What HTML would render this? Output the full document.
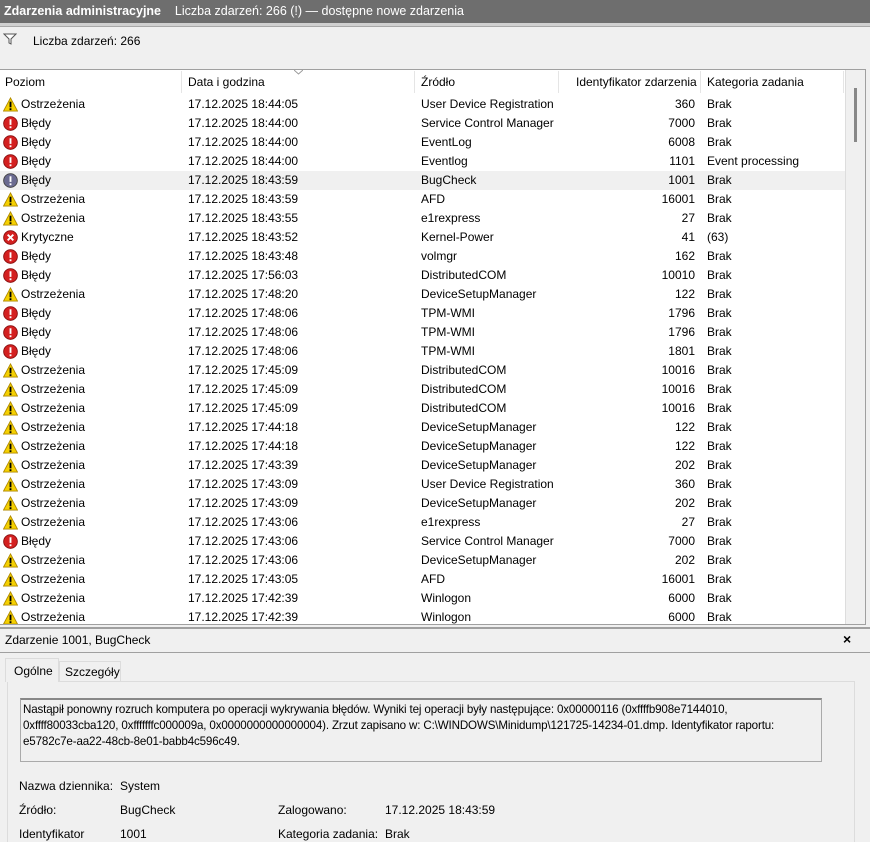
<!DOCTYPE html>
<html><head><meta charset="utf-8"><style>
*{margin:0;padding:0;box-sizing:border-box}
body{width:870px;height:842px;overflow:hidden;background:#f0f0f0;font-family:"Liberation Sans",sans-serif;font-size:12px;color:#000;position:relative}
.a{position:absolute;white-space:nowrap}
#title{left:0;top:0;width:870px;height:23px;background:#6e6e6e;color:#fff;line-height:23px;padding-left:4px;font-size:12.5px}
#list{left:0;top:69px;width:866px;height:556px;background:#fff;border-top:1px solid #a0a0a0;border-bottom:1px solid #a0a0a0;overflow:hidden}
.hdr{position:absolute;top:0;height:24px;line-height:24px;color:#000}
.sep{position:absolute;top:1px;height:22px;width:1px;background:#e5e5e5}
.row{position:absolute;left:0;width:845px;height:19px;line-height:19px}
.row span{position:absolute}
.ic{position:absolute;left:3px;top:2px;width:15px;height:15px}
</style></head><body>
<div class="a" id="title"><b>Zdarzenia administracyjne</b>&nbsp;&nbsp;&nbsp;&nbsp;Liczba zdarzeń: 266 (!) — dostępne nowe zdarzenia</div>
<div class="a" style="left:0;top:23px;width:870px;height:3px;background:#d0d0d0"></div>
<div class="a" style="left:0;top:26px;width:870px;height:1px;background:#a8a8a8"></div>
<svg class="a" style="left:3px;top:33px" width="14" height="12"><path d="M1 1H13L8 6V11L6 10V6Z" fill="#fff" stroke="#555"/></svg>
<div class="a" style="left:33px;top:34px">Liczba zdarzeń: 266</div>
<div class="a" id="list">
<div class="hdr" style="left:5px">Poziom</div><div class="sep" style="left:181px"></div>
<div class="hdr" style="left:188px">Data i godzina</div><div class="sep" style="left:414px"></div>
<svg class="a" style="left:294px;top:0" width="9" height="5"><path d="M0 0L4.5 4L9 0" fill="none" stroke="#999"/></svg>
<div class="hdr" style="left:421px">Źródło</div><div class="sep" style="left:558px"></div>
<div class="hdr" style="left:576px">Identyfikator zdarzenia</div><div class="sep" style="left:700px"></div>
<div class="hdr" style="left:707px">Kategoria zadania</div><div class="sep" style="left:843px"></div>
<div id="rows"></div>
<div class="a" style="left:845px;top:0;width:21px;height:556px;background:#f0f0f0;border-left:1px solid #ddd;border-right:1px solid #a0a0a0"></div>
<div class="a" style="left:854px;top:18px;width:3px;height:54px;background:#888"></div>
</div>
<div class="a" style="left:0;top:627px;width:870px;height:2px;background:#a0a0a0"></div>
<div class="a" style="left:5px;top:633px">Zdarzenie 1001, BugCheck</div>
<div class="a" style="left:843px;top:631px;font-weight:bold;font-size:14px">×</div>
<div class="a" style="left:0;top:652px;width:870px;height:1px;background:#a0a0a0"></div>
<div class="a" style="left:7px;top:681px;width:848px;height:161px;background:#f0f0f0;border:1px solid #dcdcdc;border-bottom:none"></div>
<div class="a" style="left:5px;top:658px;width:54px;height:24px;background:#f0f0f0;border:1px solid #dcdcdc;border-bottom:none;padding:5px 0 0 8px">Ogólne</div>
<div class="a" style="left:59px;top:661px;width:62px;height:20px;border:1px solid #dcdcdc;border-bottom:none;padding:3px 0 0 5px">Szczegóły</div>
<div class="a" style="left:20px;top:698px;width:802px;height:64px;border:1px solid #aaa;border-top:2px solid #888;background:#f0f0f0;padding:2px 2px;white-space:normal;line-height:16px;font-size:11.6px;letter-spacing:-0.15px">Nastąpił ponowny rozruch komputera po operacji wykrywania błędów. Wyniki tej operacji były następujące: 0x00000116 (0xffffb908e7144010, 0xffff80033cba120, 0xfffffffc000009a, 0x0000000000000004). Zrzut zapisano w: C:\WINDOWS\Minidump\121725-14234-01.dmp. Identyfikator raportu: e5782c7e-aa22-48cb-8e01-babb4c596c49.</div>
<div class="a" style="left:19px;top:779px">Nazwa dziennika:</div><div class="a" style="left:120px;top:779px">System</div>
<div class="a" style="left:19px;top:803px">Źródło:</div><div class="a" style="left:120px;top:803px">BugCheck</div>
<div class="a" style="left:278px;top:803px">Zalogowano:</div><div class="a" style="left:385px;top:803px">17.12.2025 18:43:59</div>
<div class="a" style="left:19px;top:827px">Identyfikator</div><div class="a" style="left:120px;top:827px">1001</div>
<div class="a" style="left:278px;top:827px">Kategoria zadania:</div><div class="a" style="left:385px;top:827px">Brak</div>
<script>
const W='<svg class="ic" viewBox="0 0 16 16"><path d="M8 1L15.5 15H0.5Z" fill="#f5d000" stroke="#b08a00"/><rect x="7" y="5" width="2" height="6" fill="#000"/><rect x="7" y="12" width="2" height="2" fill="#000"/></svg>';
const E='<svg class="ic" viewBox="0 0 16 16"><circle cx="8" cy="8" r="7.3" fill="#d42020" stroke="#8a1010"/><rect x="7" y="3.5" width="2" height="6" fill="#fff"/><rect x="7" y="11" width="2" height="2" fill="#fff"/></svg>';
const E2=E.replace('#d42020','#6a6a90').replace('#8a1010','#444');
const K='<svg class="ic" viewBox="0 0 16 16"><circle cx="8" cy="8" r="7.3" fill="#d42020" stroke="#8a1010"/><path d="M5 5L11 11M11 5L5 11" stroke="#fff" stroke-width="2"/></svg>';
const d=[
['W','18:44:05','User Device Registration',360,'Brak'],
['E','18:44:00','Service Control Manager',7000,'Brak'],
['E','18:44:00','EventLog',6008,'Brak'],
['E','18:44:00','Eventlog',1101,'Event processing'],
['S','18:43:59','BugCheck',1001,'Brak'],
['W','18:43:59','AFD',16001,'Brak'],
['W','18:43:55','e1rexpress',27,'Brak'],
['K','18:43:52','Kernel-Power',41,'(63)'],
['E','18:43:48','volmgr',162,'Brak'],
['E','17:56:03','DistributedCOM',10010,'Brak'],
['W','17:48:20','DeviceSetupManager',122,'Brak'],
['E','17:48:06','TPM-WMI',1796,'Brak'],
['E','17:48:06','TPM-WMI',1796,'Brak'],
['E','17:48:06','TPM-WMI',1801,'Brak'],
['W','17:45:09','DistributedCOM',10016,'Brak'],
['W','17:45:09','DistributedCOM',10016,'Brak'],
['W','17:45:09','DistributedCOM',10016,'Brak'],
['W','17:44:18','DeviceSetupManager',122,'Brak'],
['W','17:44:18','DeviceSetupManager',122,'Brak'],
['W','17:43:39','DeviceSetupManager',202,'Brak'],
['W','17:43:09','User Device Registration',360,'Brak'],
['W','17:43:09','DeviceSetupManager',202,'Brak'],
['W','17:43:06','e1rexpress',27,'Brak'],
['E','17:43:06','Service Control Manager',7000,'Brak'],
['W','17:43:06','DeviceSetupManager',202,'Brak'],
['W','17:43:05','AFD',16001,'Brak'],
['W','17:42:39','Winlogon',6000,'Brak'],
['W','17:42:39','Winlogon',6000,'Brak']];
let h='';
d.forEach((r,i)=>{const t=r[0];const ic=t=='W'?W:t=='E'?E:t=='S'?E2:K;
const lv=t=='W'?'Ostrzeżenia':t=='K'?'Krytyczne':'Błędy';
h+=`<div class="row" style="top:${25+i*19}px;${t=='S'?'background:#f0f0f0':''}">${ic}<span style="left:21px">${lv}</span><span style="left:188px">17.12.2025 ${r[1]}</span><span style="left:421px">${r[2]}</span><span style="right:150px">${r[3]}</span><span style="left:707px">${r[4]}</span></div>`});
document.getElementById('rows').innerHTML=h;
</script>
</body></html>
